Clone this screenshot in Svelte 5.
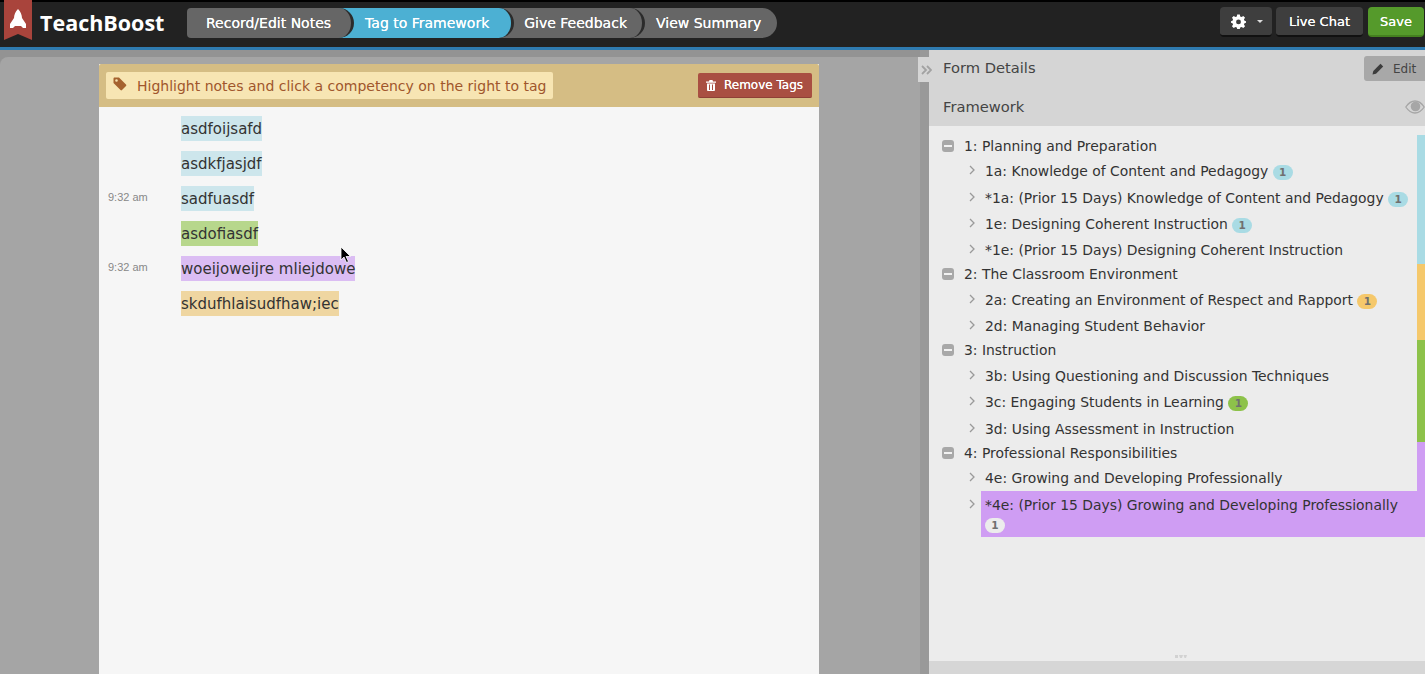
<script>
  const steps = [
    { label: 'Record/Edit Notes' },
    { label: 'Tag to Framework', active: true },
    { label: 'Give Feedback' },
    { label: 'View Summary' }
  ];

  const notes = [
    { text: 'asdfoijsafd', color: 'blue' },
    { text: 'asdkfjasjdf', color: 'blue' },
    { text: 'sadfuasdf', color: 'blue', time: '9:32 am' },
    { text: 'asdofiasdf', color: 'green' },
    { text: 'woeijoweijre mliejdowe', color: 'purple', time: '9:32 am' },
    { text: 'skdufhlaisudfhaw;iec', color: 'orange' }
  ];

  const groups = [
    {
      title: '1: Planning and Preparation',
      color: 'blue',
      items: [
        { text: '1a: Knowledge of Content and Pedagogy', count: 1 },
        { text: '*1a: (Prior 15 Days) Knowledge of Content and Pedagogy', count: 1 },
        { text: '1e: Designing Coherent Instruction', count: 1 },
        { text: '*1e: (Prior 15 Days) Designing Coherent Instruction' }
      ]
    },
    {
      title: '2: The Classroom Environment',
      color: 'orange',
      items: [
        { text: '2a: Creating an Environment of Respect and Rapport', count: 1 },
        { text: '2d: Managing Student Behavior' }
      ]
    },
    {
      title: '3: Instruction',
      color: 'green',
      items: [
        { text: '3b: Using Questioning and Discussion Techniques' },
        { text: '3c: Engaging Students in Learning', count: 1 },
        { text: '3d: Using Assessment in Instruction' }
      ]
    },
    {
      title: '4: Professional Responsibilities',
      color: 'purple',
      items: [
        { text: '4e: Growing and Developing Professionally' },
        { text: '*4e: (Prior 15 Days) Growing and Developing Professionally', count: 1, selected: true }
      ]
    }
  ];
</script>

<div class="app">
  <header class="topbar">
    <div class="brand">
      <svg class="ribbon" width="28" height="40" viewBox="0 0 28 40">
        <path d="M0 0H28V40L14 34L0 40Z" fill="#a9443c" />
        <path d="M14 9C16.500 11.500 18 15 18 18L22 24V28H19L17 26H11L9 28H6V24L10 18C10 15 11.500 11.500 14 9Z" fill="#fff" />
      </svg>
      <span class="wordmark">TeachBoost</span>
    </div>

    <nav class="steps">
      {#each steps as step}
        <a class="step" class:active={step.active} href="#top">{step.label}</a>
      {/each}
    </nav>

    <div class="actions">
      <button class="btn gear" aria-label="Settings">
        <svg width="15" height="15" viewBox="0 0 16 16">
          <path fill="#fff" fill-rule="evenodd" d="M6.600 0.500H9.400L9.800 2.600L11.300 3.200L13.100 2L15 3.900L13.800 5.700L14.400 7.200L16 7.600V9.400L14.400 9.800L13.800 11.300L15 13.100L13.100 15L11.300 13.800L9.800 14.400L9.400 16H6.600L6.200 14.400L4.700 13.800L2.900 15L1 13.100L2.200 11.300L1.600 9.800L0 9.400V7.600L1.600 7.200L2.200 5.700L1 3.900L2.900 2L4.700 3.200L6.200 2.600ZM8 5.800A2.600 2.600 0 1 0 8 11A2.600 2.600 0 1 0 8 5.800Z" />
        </svg>
        <span class="caret"></span>
      </button>
      <button class="btn">Live Chat</button>
      <button class="btn save">Save</button>
    </div>
  </header>

  <main class="body">
    <section class="left">
      <div class="canvas">
        <div class="paper">
          <div class="toolbar">
            <div class="hint">
              <svg width="14" height="14" viewBox="0 0 14 14">
                <path fill="#a5622f" fill-rule="evenodd" d="M0.500 1.500C0.500 1 1 0.500 1.500 0.500H6L13 7.500C13.500 8 13.500 8.500 13 9L9 13C8.500 13.500 8 13.500 7.500 13L0.500 6ZM3.500 2.200A1.300 1.300 0 1 0 3.500 4.800A1.300 1.300 0 1 0 3.500 2.200Z" />
              </svg>
              <span>Highlight notes and click a competency on the right to tag</span>
            </div>
            <button class="remove">
              <svg width="10" height="11" viewBox="0 0 10 11">
                <path fill="#fff" fill-rule="evenodd" d="M3.500 0H6.500L7 1.500H10V2.800H0V1.500H3ZM1 3.500H9V10C9 10.500 8.500 11 8 11H2C1.500 11 1 10.500 1 10ZM3 4.500V10H4V4.500ZM6 4.500V10H7V4.500Z" />
              </svg>
              Remove Tags
            </button>
          </div>

          <div class="notes">
            {#each notes as note}
              <div class="note">
                <span class="time">{note.time ?? ''}</span>
                <span class="mark {note.color}">{note.text}</span>
              </div>
            {/each}
          </div>
        </div>
      </div>

      <svg class="cursor" width="12" height="18" viewBox="0 0 12 18">
        <path d="M1 1V14L4 11L6.500 16.500L8.500 15.500L6 10.500H10.500Z" fill="#000" stroke="#fff" stroke-width="0.800" />
      </svg>
    </section>

    <div class="splitter">
      <button class="collapse" aria-label="Collapse">
        <svg width="11" height="10" viewBox="0 0 11 10">
          <path d="M1 1L5 5L1 9M6 1L10 5L6 9" fill="none" stroke="#a2a2a2" stroke-width="1.800" />
        </svg>
      </button>
    </div>

    <aside class="right">
      <div class="head">
        <span>Form Details</span>
        <button class="edit">
          <svg width="12" height="12" viewBox="0 0 12 12">
            <path fill="#3c3c3c" d="M8.500 0.800L11.200 3.500L4 10.700L0.500 11.500L1.300 8Z" />
          </svg>
          Edit
        </button>
      </div>
      <div class="head">
        <span>Framework</span>
        <svg class="eye" width="20" height="14" viewBox="0 0 20 14">
          <path fill="none" stroke="#a6a6a6" stroke-width="1.300" d="M0.800 7C3.500 3 6.500 1 10 1S16.500 3 19.200 7C16.500 11 13.500 13 10 13S3.500 11 0.800 7Z" />
          <circle cx="10.500" cy="6.500" r="4.800" fill="#a6a6a6" />
        </svg>
      </div>

      <div class="tree">
        {#each groups as group}
          <div class="group {group.color}">
            <div class="group-title">
              <span class="minus"></span>
              {group.title}
            </div>
            {#each group.items as item}
              <div class="item">
                <svg class="chevron" width="6" height="10" viewBox="0 0 6 10">
                  <path d="M1 1L5 5L1 9" fill="none" stroke="#9a9a9a" stroke-width="1.300" />
                </svg>
                <div class="label" class:selected={item.selected}>
                  {item.text}
                  {#if item.count}
                    <span class="badge">{item.count}</span>
                  {/if}
                </div>
              </div>
            {/each}
          </div>
        {/each}

        <svg class="grip" width="12" height="3" viewBox="0 0 12 3">
          <path fill="#d2d2d2" d="M0 0H3V3H0ZM4 0H8L7 3H5ZM8.500 0H12L11 3H9.500Z" />
        </svg>
      </div>

      <div class="footer"></div>
    </aside>
  </main>
</div>

<style>
  :global(body) {
    margin: 0;
    background: #a5a5a5;
  }

  .app {
    display: flex;
    flex-direction: column;
    height: 100vh;
    overflow: hidden;
    font-family: "DejaVu Sans", Verdana, sans-serif;
    color: #333;
  }

  button {
    font-family: inherit;
    border: 0;
    padding: 0;
  }

  /* barra superior */
  .topbar {
    display: flex;
    flex: none;
    height: 45px;
    background: #222;
    border-top: 2px solid #000;
    border-bottom: 3px solid #2f7bb0;
  }

  .brand {
    display: flex;
    width: 187px;
    flex: none;
  }

  .ribbon {
    flex: none;
    margin: -2px 0 0 4px;
  }

  .wordmark {
    margin: 5px 0 0 8px;
    font-family: "Open Sans", sans-serif;
    font-size: 21.500px;
    font-weight: 700;
    line-height: 32px;
    color: #fff;
  }

  .steps {
    display: flex;
    height: 30px;
    margin-top: 6px;
  }

  .step {
    box-sizing: border-box;
    height: 30px;
    margin-left: -15px;
    padding: 0 15px 0 25px;
    background: #666;
    border-right: 3px solid #2b2b2b;
    border-radius: 0 15px 15px 0;
    font-size: 14px;
    line-height: 30px;
    color: #fff;
    text-decoration: none;
    white-space: nowrap;
    text-shadow: 0 0 0.6px #fff;
  }

  .step:nth-child(1) {
    z-index: 4;
    margin-left: 0;
    padding: 0 20px 0 19px;
    border-radius: 4px 15px 15px 4px;
  }

  .step:nth-child(2) {
    z-index: 3;
    padding: 0 22px 0 26px;
  }

  .step:nth-child(3) {
    z-index: 2;
  }

  .step:nth-child(4) {
    z-index: 1;
    border-right: 0;
    padding: 0 16px 0 26px;
  }

  .step.active {
    background: #4cb0d3;
  }

  .actions {
    display: flex;
    gap: 4px;
    margin: 5px 1px 0 auto;
    height: 30px;
  }

  .btn {
    box-sizing: border-box;
    height: 30px;
    padding: 0 13px;
    background: #3e3e3e;
    border-bottom: 2px solid #111;
    border-radius: 4px;
    font-size: 13px;
    color: #fff;
    text-shadow: 0 0 0.6px #fff;
  }

  .btn.gear {
    display: flex;
    align-items: center;
    gap: 11px;
    width: 52px;
    padding: 0 0 0 11px;
  }

  .gear svg {
    flex: none;
  }

  .caret {
    flex: none;
    width: 0;
    height: 0;
    border: 3px solid transparent;
    border-top: 3px solid #ddd;
    border-bottom: 0;
  }

  .btn.save {
    width: 56px;
    margin-left: 1px;
    padding: 0;
    background: #559a2b;
    border-bottom-color: #44801f;
  }

  .body {
    display: flex;
    flex: 1;
    min-height: 0;
  }

  /* area de notas */
  .left {
    position: relative;
    flex: 1;
    min-width: 0;
    padding-top: 7px;
    background: #939393;
  }

  .canvas {
    box-sizing: border-box;
    height: 100%;
    padding: 7px 0 0 99px;
    background: #a5a5a5;
    border-radius: 8px 0 0 0;
  }

  .paper {
    width: 720px;
    height: 100%;
    background: #f6f6f6;
  }

  .toolbar {
    display: flex;
    align-items: center;
    justify-content: space-between;
    box-sizing: border-box;
    height: 43px;
    padding: 0 7px;
    background: #d5bd84;
    border-radius: 2px 2px 0 0;
  }

  .hint {
    display: flex;
    align-items: center;
    gap: 10px;
    height: 27px;
    padding: 0 7px;
    background: #f7e5b3;
    border-radius: 2px;
    font-size: 14px;
    color: #a0562c;
  }

  .hint svg {
    margin-top: -3px;
  }

  .remove {
    display: flex;
    align-items: center;
    gap: 8px;
    box-sizing: border-box;
    width: 114px;
    height: 25px;
    padding-left: 8px;
    background: #a94f42;
    border-bottom: 1px solid #8f4036;
    border-radius: 2px;
    font-size: 12px;
    color: #fff;
    text-shadow: 0 0 0.5px #fff;
  }

  .notes {
    padding-top: 9px;
  }

  .note {
    display: flex;
    height: 25px;
    margin-bottom: 10px;
  }

  .time {
    flex: none;
    box-sizing: border-box;
    width: 82px;
    padding: 5px 0 0 9px;
    font-family: "Liberation Sans", Arial, sans-serif;
    font-size: 11px;
    color: #888;
  }

  .mark {
    padding-top: 1px;
    font-size: 15px;
    line-height: 24px;
    color: #333;
  }

  .mark.blue {
    background: #cde6ec;
  }

  .mark.green {
    background: #b7d78c;
  }

  .mark.purple {
    background: #dbbdf3;
  }

  .mark.orange {
    background: #efd6a1;
  }

  .cursor {
    position: absolute;
    left: 340px;
    top: 196px;
  }

  .splitter {
    position: relative;
    flex: none;
    width: 9px;
    background: #999;
  }

  .collapse {
    position: absolute;
    top: 7px;
    right: -5px;
    display: flex;
    align-items: center;
    justify-content: center;
    width: 16px;
    height: 25px;
    background: #d5d5d5;
  }

  /* painel direito */
  .right {
    display: flex;
    flex-direction: column;
    flex: none;
    width: 496px;
    background: #ececec;
  }

  .head {
    display: flex;
    align-items: center;
    justify-content: space-between;
    flex: none;
    height: 38px;
    padding-left: 14px;
    background: #d5d5d5;
    font-size: 14.700px;
    color: #444;
  }

  .head span {
    margin-bottom: 3px;
  }

  .head + .head span {
    margin-bottom: 1px;
  }

  .edit {
    display: flex;
    align-items: center;
    gap: 9px;
    box-sizing: border-box;
    width: 61px;
    height: 25px;
    margin-top: -1px;
    padding-left: 8px;
    background: #a8a8a8;
    border-radius: 3px 0 0 3px;
    font-size: 12px;
    color: #444;
  }

  .tree {
    display: flex;
    flex-direction: column;
    flex: 1;
    padding-top: 9px;
  }

  .group {
    border-right: 8px solid transparent;
  }

  .group.blue {
    border-right-color: #a9dbe4;
  }

  .group.orange {
    border-right-color: #f5c86b;
  }

  .group.green {
    border-right-color: #8dc24a;
  }

  .group.purple {
    border-right-color: #cf9df3;
  }

  .group-title {
    display: flex;
    align-items: center;
    gap: 10px;
    box-sizing: border-box;
    height: 23.330px;
    padding: 0 0 2px 13px;
    font-size: 13.900px;
    color: #333;
  }

  .minus {
    position: relative;
    width: 12px;
    height: 12px;
    background: #a8a8a8;
    border-radius: 3px;
  }

  .minus::after {
    content: "";
    position: absolute;
    left: 2px;
    right: 2px;
    top: 5px;
    height: 2px;
    background: #f2f2f2;
  }

  .item {
    display: flex;
    align-items: flex-start;
    padding-left: 40px;
  }

  .chevron {
    flex: none;
    margin-top: 7px;
  }

  .label {
    flex: 1;
    min-height: 26.330px;
    margin-left: 6px;
    padding: 0 0 0 4px;
    font-size: 13.900px;
    line-height: 26px;
    color: #333;
  }

  .label.selected {
    margin: -1px -8px 0 6px;
    padding: 5px 10px 2px 4px;
    line-height: 19.500px;
    background: #cf9df3;
  }

  .badge {
    display: inline-block;
    box-sizing: border-box;
    width: 20px;
    height: 15px;
    background: #a9dbe4;
    border-radius: 8px;
    font-size: 10.500px;
    font-weight: 700;
    line-height: 15px;
    text-align: center;
    color: #707070;
  }

  .orange .badge {
    background: #f5c86b;
  }

  .green .badge {
    background: #8dc24a;
  }

  .purple .badge {
    background: #ececec;
  }

  .grip {
    align-self: center;
    margin: auto 0 3px 8px;
  }

  .footer {
    flex: none;
    height: 13px;
    background: #d6d6d6;
  }
</style>
